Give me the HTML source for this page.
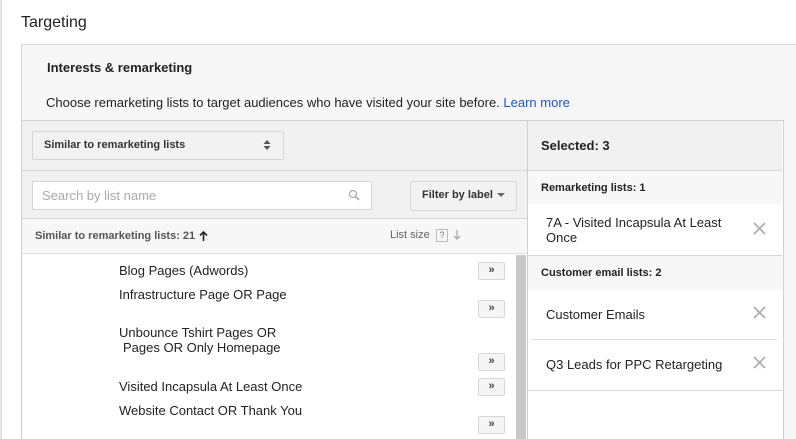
<!DOCTYPE html>
<html style="overflow:hidden;height:439px"><head><style>
body{margin:0;width:796px;height:439px;overflow:hidden;background:#fff;font-family:"Liberation Sans",Arial,sans-serif;position:relative;color:#222}
.a{position:absolute;white-space:nowrap}
.btn{position:absolute;left:478px;width:25px;height:16px;border:1px solid #d8d8d8;border-radius:2px;background:#f5f5f5;font-size:11px;text-align:center;line-height:15px;color:#444;font-weight:bold}
.x{position:absolute;left:753px}
.it{font-size:13px;color:#222}
</style></head><body>
<div class="a" style="left:0;top:0;width:2px;height:439px;background:#e4e4e4"></div>
<div class="a" style="left:21px;top:14px;font-size:16px;color:#222">Targeting</div>
<div class="a" style="left:21px;top:44px;width:800px;height:395px;background:#f7f7f7;border-top:1px solid #d9d9d9;border-left:1px solid #d9d9d9"></div>
<div class="a" style="left:47px;top:60px;font-size:13px;font-weight:bold;color:#222">Interests &amp; remarketing</div>
<div class="a" style="left:46px;top:95px;font-size:13px;color:#222">Choose remarketing lists to target audiences who have visited your site before. <span style="color:#1a55cc">Learn more</span></div>
<div class="a" style="left:21px;top:120px;width:761px;height:330px;border:1px solid #cfcfcf;background:#fff"></div>
<div class="a" style="left:22px;top:121px;width:505px;height:97px;background:#f1f1f1;border-bottom:1px solid #d6d6d6"></div>
<div class="a" style="left:22px;top:170px;width:505px;height:1px;background:#d6d6d6"></div>
<div class="a" style="left:22px;top:219px;width:505px;height:34px;background:#f7f7f7;border-bottom:1px solid #e2e2e2"></div>
<div class="a" style="left:527px;top:121px;width:1px;height:320px;background:#cfcfcf"></div>
<div class="a" style="left:32px;top:131px;width:250px;height:27px;border:1px solid #d6d6d6;border-radius:2px;background:#f2f2f2"></div>
<div class="a" style="left:44px;top:139px;font-size:11px;font-weight:bold;color:#333">Similar to remarketing lists</div>
<svg class="a" style="left:263px;top:139px" width="8" height="12"><path d="M0.5 5L4 1L7.5 5Z M0.5 7L4 11L7.5 7Z" fill="#555"/></svg>
<div class="a" style="left:32px;top:181px;width:338px;height:27px;border:1px solid #d6d6d6;background:#fff"></div>
<div class="a" style="left:42px;top:188px;font-size:13px;color:#aaa">Search by list name</div>
<svg class="a" style="left:348px;top:189px" width="14" height="14"><circle cx="5" cy="5" r="3.5" fill="none" stroke="#aaa" stroke-width="1.3"/><path d="M7.7 7.7L11 11" stroke="#aaa" stroke-width="1.6"/></svg>
<div class="a" style="left:410px;top:181px;width:105px;height:28px;border:1px solid #d6d6d6;border-radius:2px;background:#f2f2f2"></div>
<div class="a" style="left:422px;top:189px;font-size:11px;font-weight:bold;color:#333">Filter by label</div>
<svg class="a" style="left:497px;top:193px" width="8" height="5"><path d="M0 0H8L4 4Z" fill="#666"/></svg>
<div class="a" style="left:35px;top:230px;font-size:11px;font-weight:bold;color:#555">Similar to remarketing lists: 21</div>
<svg class="a" style="left:199px;top:231px" width="9" height="10"><path d="M4.5 1V10M1 4.5L4.5 1L8 4.5" fill="none" stroke="#222" stroke-width="1.6"/></svg>
<div class="a" style="left:390px;top:229px;font-size:11px;color:#666">List size</div>
<div class="a" style="left:436px;top:229px;width:10px;height:11px;border:1px solid #bbb;font-size:9px;text-align:center;line-height:11px;color:#777">?</div>
<svg class="a" style="left:453px;top:230px" width="8" height="10"><path d="M4 0V9M1 6L4 9L7 6" fill="none" stroke="#aaa" stroke-width="1.3"/></svg>
<div class="a" style="left:516px;top:255px;width:10px;height:190px;background:#c8c8c8"></div>
<div class="a it" style="left:119px;top:263px">Blog Pages (Adwords)</div>
<div class="a it" style="left:119px;top:287px">Infrastructure Page OR Page</div>
<div class="a it" style="left:119px;top:325px">Unbounce Tshirt Pages OR</div>
<div class="a it" style="left:123px;top:340px">Pages OR Only Homepage</div>
<div class="a it" style="left:119px;top:379px">Visited Incapsula At Least Once</div>
<div class="a it" style="left:119px;top:403px">Website Contact OR Thank You</div>
<div class="btn" style="top:262px">»</div>
<div class="btn" style="top:300px">»</div>
<div class="btn" style="top:353px">»</div>
<div class="btn" style="top:378px">»</div>
<div class="btn" style="top:416px">»</div>
<div class="a" style="left:528px;top:121px;width:254px;height:49px;background:#f1f1f1;border-bottom:1px solid #d6d6d6"></div>
<div class="a" style="left:541px;top:138px;font-size:13px;font-weight:bold;color:#222">Selected: 3</div>
<div class="a" style="left:528px;top:171px;width:254px;height:33px;background:#f7f7f7"></div>
<div class="a" style="left:541px;top:182px;font-size:11px;font-weight:bold;color:#222">Remarketing lists: 1</div>
<div class="a it" style="left:546px;top:215px;line-height:15px">7A - Visited Incapsula At Least<br>Once</div>
<svg class="x" style="top:222px" width="13" height="13"><path d="M1 1L12 12M12 1L1 12" stroke="#aaa" stroke-width="1.6"/></svg>
<div class="a" style="left:528px;top:255px;width:254px;height:1px;background:#d6d6d6"></div>
<div class="a" style="left:528px;top:256px;width:254px;height:34px;background:#f7f7f7"></div>
<div class="a" style="left:541px;top:267px;font-size:11px;font-weight:bold;color:#222">Customer email lists: 2</div>
<div class="a it" style="left:546px;top:307px">Customer Emails</div>
<svg class="x" style="top:306px" width="13" height="13"><path d="M1 1L12 12M12 1L1 12" stroke="#aaa" stroke-width="1.6"/></svg>
<div class="a" style="left:533px;top:339px;width:244px;height:1px;background:#ddd"></div>
<div class="a it" style="left:546px;top:357px">Q3 Leads for PPC Retargeting</div>
<svg class="x" style="top:356px" width="13" height="13"><path d="M1 1L12 12M12 1L1 12" stroke="#aaa" stroke-width="1.6"/></svg>
<div class="a" style="left:528px;top:390px;width:254px;height:1px;background:#d6d6d6"></div>
</body></html>
